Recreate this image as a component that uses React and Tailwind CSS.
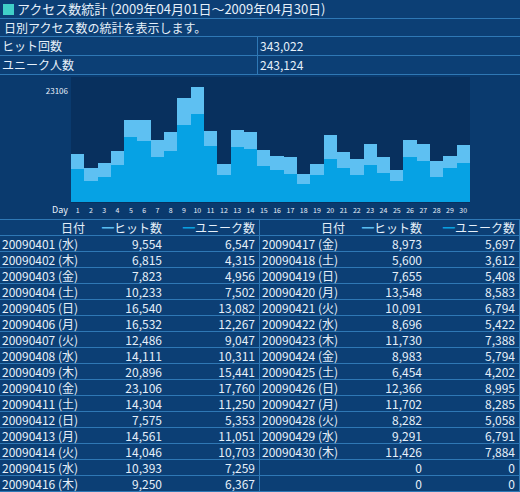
const LEFT = [
  ["20090401", "水", 9554, 6547],
  ["20090402", "木", 6815, 4315],
  ["20090403", "金", 7823, 4956],
  ["20090404", "土", 10233, 7502],
  ["20090405", "日", 16540, 13082],
  ["20090406", "月", 16532, 12267],
  ["20090407", "火", 12486, 9047],
  ["20090408", "水", 14111, 10311],
  ["20090409", "木", 20896, 15441],
  ["20090410", "金", 23106, 17760],
  ["20090411", "土", 14304, 11250],
  ["20090412", "日", 7575, 5353],
  ["20090413", "月", 14561, 11051],
  ["20090414", "火", 14046, 10703],
  ["20090415", "水", 10393, 7259],
  ["20090416", "木", 9250, 6367],
];

const RIGHT = [
  ["20090417", "金", 8973, 5697],
  ["20090418", "土", 5600, 3612],
  ["20090419", "日", 7655, 5408],
  ["20090420", "月", 13548, 8583],
  ["20090421", "火", 10091, 6794],
  ["20090422", "水", 8696, 5422],
  ["20090423", "木", 11730, 7388],
  ["20090424", "金", 8983, 5794],
  ["20090425", "土", 6454, 4202],
  ["20090426", "日", 12366, 8995],
  ["20090427", "月", 11702, 8285],
  ["20090428", "火", 8282, 5058],
  ["20090429", "水", 9291, 6791],
  ["20090430", "木", 11426, 7884],
  [null, null, 0, 0],
  [null, null, 0, 0],
];

const DAYS = [...LEFT, ...RIGHT.slice(0, 14)];
const fmt = (n) => n.toLocaleString("en-US");

function Half({ rows }) {
  return (
    <div className="flex-1 border-r border-[#2f78b5]">
      <div className="flex h-4 border-b border-[#2f78b5]">
        <div className="w-[100px] text-right pr-[15px]">日付</div>
        <div className="w-[66px] text-right pr-1">
          <span className="text-[#5bbcf0]">━</span>ヒット数
        </div>
        <div className="flex-1 text-right pr-1">
          <span className="text-[#0aa0e0]">━</span>ユニーク数
        </div>
      </div>
      {rows.map((r, i) => (
        <div key={i} className="flex h-4 border-b border-[#2f78b5] leading-[15px]">
          <div className="w-[100px] pl-[2px]">{r[0] ? `${r[0]} (${r[1]})` : ""}</div>
          <div className="w-[66px] text-right pr-1">{fmt(r[2])}</div>
          <div className="flex-1 text-right pr-1">{fmt(r[3])}</div>
        </div>
      ))}
    </div>
  );
}

export default function App() {
  const max = 23106;
  return (
    <div
      className="w-[520px] h-[492px] overflow-hidden bg-[#0c3f75] text-[#e6f0fa] text-[12px] leading-[16px]"
      style={{ fontFamily: '"Noto Sans CJK JP", sans-serif' }}
    >
      <div className="h-[19px] flex items-center border-b border-[#2f78b5] text-[13px]">
        <span className="w-[11px] h-[11px] bg-[#40d0c8] mx-[3px]" />
        アクセス数統計 (2009年04月01日～2009年04月30日)
      </div>
      <div className="h-[18px] flex items-center pl-1 border-b border-[#2f78b5]">日別アクセス数の統計を表示します。</div>
      <div className="h-[19px] flex border-b border-[#2f78b5]">
        <div className="w-[258px] pl-[2px] border-r border-[#2f78b5] flex items-center">ヒット回数</div>
        <div className="flex-1 pl-[2px] flex items-center">343,022</div>
      </div>
      <div className="h-[19px] flex border-b border-[#2f78b5]">
        <div className="w-[258px] pl-[2px] border-r border-[#2f78b5] flex items-center">ユニーク人数</div>
        <div className="flex-1 pl-[2px] flex items-center">243,124</div>
      </div>
      <div className="h-[145px] border-b border-[#2f78b5] bg-[#0a3a6e] pt-[2px] flex flex-col">
        <div className="flex h-[126px]">
          <div className="w-[71px] text-right pr-[3px] text-[8px] leading-[8px] pt-[10px]">23106</div>
          <div className="w-[399px] bg-[#08305e] flex items-end pb-[1px]">
            {DAYS.map((d, i) => (
              <div key={i} className="flex-1 flex flex-col justify-end">
                <div className="bg-[#5ec0f2]" style={{ height: ((d[2] - d[3]) / max) * 115 }} />
                <div className="bg-[#06a2e4]" style={{ height: (d[3] / max) * 115 }} />
              </div>
            ))}
          </div>
        </div>
        <div className="flex text-[7px] leading-[14px]">
          <div className="w-[71px] text-right pr-[3px] text-[9px]">Day</div>
          <div className="w-[399px] flex">
            {DAYS.map((_, i) => (
              <div key={i} className="flex-1 text-center">{i + 1}</div>
            ))}
          </div>
        </div>
      </div>
      <div className="flex">
        <Half rows={LEFT} />
        <Half rows={RIGHT} />
      </div>
    </div>
  );
}
